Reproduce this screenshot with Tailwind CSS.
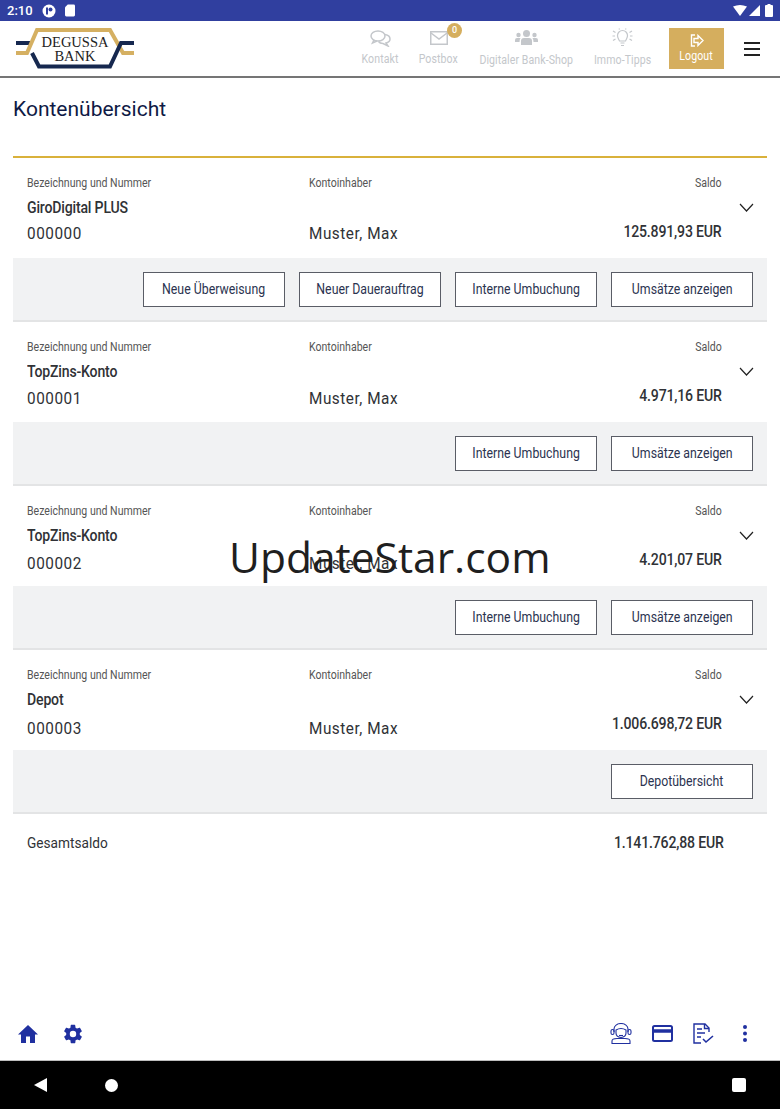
<!DOCTYPE html>
<html>
  <head>
    <meta charset="utf-8" />
    <title>Kontenübersicht</title>
    <script src="https://cdn.jsdelivr.net/npm/@tailwindcss/browser@4"></script>
  </head>

  <body class="bg-white font-['Roboto',sans-serif]">
    <div class="relative flex flex-col h-[1109px] w-[780px] overflow-hidden">
      <!-- Status bar -->
      <div class="flex items-center justify-between h-[21px] bg-[#303f9f] pl-[7px] pr-[7px] text-white shrink-0">
        <div class="flex items-center gap-[9px]">
          <span class="text-[13px] font-medium leading-none">2:10</span>
          <svg width="14" height="14" viewBox="0 0 14 14"><circle cx="7" cy="7" r="6.5" fill="#fff"/><rect x="4" y="3.5" width="2" height="7" fill="#303f9f"/><circle cx="8.5" cy="5.5" r="2" fill="#303f9f"/></svg>
          <svg width="10" height="13" viewBox="0 0 11 13"><path d="M3 0H9.500A1.500 1.500 0 0 1 11 1.500V11.500A1.500 1.500 0 0 1 9.500 13H1.500A1.500 1.500 0 0 1 0 11.500V3Z" fill="#fff"/></svg>
        </div>
        <div class="flex items-center gap-[2px]">
          <svg width="14" height="11" viewBox="0 0 14 11"><path d="M0 1.500Q7 -1.500 14 1.500L7 11Z" fill="#fff"/></svg>
          <svg width="11" height="11" viewBox="0 0 11 11"><path d="M11 0V11H0Z" fill="#fff"/></svg>
          <svg width="8" height="13" viewBox="0 0 8 13" class="ml-[3px]"><path d="M2.500 0H5.500V1H7A1 1 0 0 1 8 2V12A1 1 0 0 1 7 13H1A1 1 0 0 1 0 12V2A1 1 0 0 1 1 1H2.500Z" fill="#fff"/></svg>
        </div>
      </div>

      <!-- Header -->
      <header class="flex items-center justify-between h-[57px] border-b-2 border-[#757575] pl-[16px] shrink-0">
        <svg width="118" height="42" viewBox="0 0 118 42" class="mt-[-1px]">
          <path d="M0 16H15" stroke="#16284f" stroke-width="4" fill="none"/>
          <path d="M0 26H11L21 3H94L107 26H118" stroke="#d5b062" stroke-width="4" fill="none"/>
          <path d="M16 26L23 39.500H94L105 16H118" stroke="#16284f" stroke-width="4" fill="none"/>
          <text x="59" y="20" text-anchor="middle" font-family="Liberation Serif" font-size="14.500" fill="#222">DEGUSSA</text>
          <text x="59" y="34" text-anchor="middle" font-family="Liberation Serif" font-size="14.500" fill="#222">BANK</text>
        </svg>
        <nav class="flex items-start self-stretch text-[12px] leading-none text-[#c4c7cb] tracking-[0.1px]">
          <a class="flex flex-col items-center w-[36px] mr-[21px] pt-[9px]" href="#">
            <svg width="21" height="17" viewBox="0 0 21 17" fill="none" stroke="#c4c7cb" stroke-width="1.500"><ellipse cx="8" cy="6" rx="7" ry="5"/><path d="M4 10L2.500 13L7 11"/><path d="M15 4.500C18 5 20 7 20 9C20 11 18.500 12.500 16 13L18 16L13 13.500C11.500 13.500 9.500 13 8.500 11.500"/></svg>
            <span class="mt-[6px] whitespace-nowrap scale-x-[.88]">Kontakt</span>
          </a>
          <a class="relative flex flex-col items-center w-[39px] mr-[21px] pt-[10px]" href="#">
            <svg width="18" height="14" viewBox="0 0 18 14" fill="none" stroke="#c4c7cb" stroke-width="1.500"><rect x="0.750" y="0.750" width="16.500" height="12.500"/><path d="M1 2L9 8L17 2"/></svg>
            <span class="mt-[8px] whitespace-nowrap scale-x-[.88]">Postbox</span>
            <span class="absolute left-[28px] top-[2px] flex items-center justify-center size-[15px] rounded-full bg-[#d5ae5e] text-[9px] font-medium text-white">0</span>
          </a>
          <a class="flex flex-col items-center w-[95px] mr-[20px] pt-[9px]" href="#">
            <svg width="23" height="15" viewBox="0 0 23 15" fill="#c4c7cb"><circle cx="11.500" cy="3.500" r="3.500"/><circle cx="3.500" cy="5" r="2.200"/><circle cx="19.500" cy="5" r="2.200"/><path d="M6 15V11Q6 8 9 8H14Q17 8 17 11V15Z"/><path d="M0 12V10Q0 8 2 8H5.500Q4.500 9.500 4.500 12Z"/><path d="M23 12V10Q23 8 21 8H17.500Q18.500 9.500 18.500 12Z"/></svg>
            <span class="mt-[9px] whitespace-nowrap scale-x-[.88]">Digitaler Bank-Shop</span>
          </a>
          <a class="flex flex-col items-center w-[57px] mr-[18px] pt-[7px]" href="#">
            <svg width="21" height="19" viewBox="0 0 21 19" fill="none" stroke="#c4c7cb" stroke-width="1.200"><path d="M7.500 13C6.500 10.500 5.500 10 5.500 7.500A5 5 0 0 1 15.500 7.500C15.500 10 14.500 10.500 13.500 13Z"/><path d="M8.500 15H12.500M9 17.500H12"/><path d="M1 3L3.500 4.500M0.500 8H3M1 12.500L3.500 11M20 3L17.500 4.500M20.500 8H18M20 12.500L17.500 11M7 0.500L7.500 1.500M14 0.500L13.500 1.500"/></svg>
            <span class="mt-[7px] whitespace-nowrap scale-x-[.88]">Immo-Tipps</span>
          </a>
          <a class="flex flex-col items-center w-[55px] h-[41px] mt-[7px] bg-[#d5ae5e] text-white pt-[6px]" href="#">
            <svg width="14" height="13" viewBox="0 0 14 13" fill="none" stroke="#fff" stroke-width="1.400"><path d="M5 1H1.500V12H5"/><path d="M4 4.500H8V1.500L13 6.500L8 11.500V8.500H4Z"/></svg>
            <span class="mt-[3px] whitespace-nowrap scale-x-[.88]">Logout</span>
          </a>
          <button class="flex flex-col gap-[4px] w-[16px] ml-[20px] mr-[20px] mt-[21px]">
            <span class="h-[2px] bg-[#222]"></span>
            <span class="h-[2px] bg-[#222]"></span>
            <span class="h-[2px] bg-[#222]"></span>
          </button>
        </nav>
      </header>

      <!-- Content -->
      <main class="flex-1 px-[13px]">
        <h1 class="h-[80px] border-b-2 border-[#d9b13b] pt-[18px] text-[21px] leading-[26px] font-normal text-[#0f1a45]">Kontenübersicht</h1>

        <section class="border-b-2 border-[#e3e4e5]">
          <div class="relative flex h-[100px] pl-[14px] pr-[45px] pt-[18px] text-[#303236]">
            <div class="w-[282px]">
              <p class="text-[12px] leading-[15px] text-[#555] origin-left scale-x-[.88]">Bezeichnung und Nummer</p>
              <p class="mt-[7px] text-[16px] leading-[20px] font-medium tracking-[-0.2px] origin-left scale-x-[.88]">GiroDigital PLUS</p>
              <p class="mt-[4px] text-[17px] leading-[22px] tracking-[0.6px] origin-left scale-x-[.9]">000000</p>
            </div>
            <div class="flex-1">
              <p class="text-[12px] leading-[15px] text-[#555] origin-left scale-x-[.88]">Kontoinhaber</p>
              <p class="mt-[31px] text-[17px] leading-[22px] tracking-[0.6px] origin-left scale-x-[.9]">Muster, Max</p>
            </div>
            <div class="text-right">
              <p class="text-[12px] leading-[15px] text-[#555] origin-right scale-x-[.88]">Saldo</p>
              <p class="mt-[30px] text-[16px] leading-[22px] font-medium tracking-[-0.2px] origin-right scale-x-[.88]">125.891,93 EUR</p>
            </div>
            <svg class="absolute right-[13px] top-[45px]" width="15" height="9" viewBox="0 0 15 9" fill="none" stroke="#222" stroke-width="1.200"><path d="M1 1L7.500 8L14 1"/></svg>
          </div>
          <div class="flex justify-end gap-[14px] h-[62px] bg-[#f1f2f3] pt-[14px] pr-[14px]">
            <button class="w-[142px] h-[35px] border border-[#5a5d66] bg-white text-[14px] text-[#2b3350]"><span class="inline-block whitespace-nowrap scale-x-[.88]">Neue Überweisung</span></button>
            <button class="w-[142px] h-[35px] border border-[#5a5d66] bg-white text-[14px] text-[#2b3350]"><span class="inline-block whitespace-nowrap scale-x-[.88]">Neuer Dauerauftrag</span></button>
            <button class="w-[142px] h-[35px] border border-[#5a5d66] bg-white text-[14px] text-[#2b3350]"><span class="inline-block whitespace-nowrap scale-x-[.88]">Interne Umbuchung</span></button>
            <button class="w-[142px] h-[35px] border border-[#5a5d66] bg-white text-[14px] text-[#2b3350]"><span class="inline-block whitespace-nowrap scale-x-[.88]">Umsätze anzeigen</span></button>
          </div>
        </section>

        <section class="border-b-2 border-[#e3e4e5]">
          <div class="relative flex h-[100px] pl-[14px] pr-[45px] pt-[18px] text-[#303236]">
            <div class="w-[282px]">
              <p class="text-[12px] leading-[15px] text-[#555] origin-left scale-x-[.88]">Bezeichnung und Nummer</p>
              <p class="mt-[7px] text-[16px] leading-[20px] font-medium tracking-[-0.2px] origin-left scale-x-[.88]">TopZins-Konto</p>
              <p class="mt-[5px] text-[17px] leading-[22px] tracking-[0.6px] origin-left scale-x-[.9]">000001</p>
            </div>
            <div class="flex-1">
              <p class="text-[12px] leading-[15px] text-[#555] origin-left scale-x-[.88]">Kontoinhaber</p>
              <p class="mt-[32px] text-[17px] leading-[22px] tracking-[0.6px] origin-left scale-x-[.9]">Muster, Max</p>
            </div>
            <div class="text-right">
              <p class="text-[12px] leading-[15px] text-[#555] origin-right scale-x-[.88]">Saldo</p>
              <p class="mt-[30px] text-[16px] leading-[22px] font-medium tracking-[-0.2px] origin-right scale-x-[.88]">4.971,16 EUR</p>
            </div>
            <svg class="absolute right-[13px] top-[45px]" width="15" height="9" viewBox="0 0 15 9" fill="none" stroke="#222" stroke-width="1.200"><path d="M1 1L7.500 8L14 1"/></svg>
          </div>
          <div class="flex justify-end gap-[14px] h-[62px] bg-[#f1f2f3] pt-[14px] pr-[14px]">
            <button class="w-[142px] h-[35px] border border-[#5a5d66] bg-white text-[14px] text-[#2b3350]"><span class="inline-block whitespace-nowrap scale-x-[.88]">Interne Umbuchung</span></button>
            <button class="w-[142px] h-[35px] border border-[#5a5d66] bg-white text-[14px] text-[#2b3350]"><span class="inline-block whitespace-nowrap scale-x-[.88]">Umsätze anzeigen</span></button>
          </div>
        </section>

        <section class="border-b-2 border-[#e3e4e5]">
          <div class="relative flex h-[100px] pl-[14px] pr-[45px] pt-[18px] text-[#303236]">
            <div class="w-[282px]">
              <p class="text-[12px] leading-[15px] text-[#555] origin-left scale-x-[.88]">Bezeichnung und Nummer</p>
              <p class="mt-[7px] text-[16px] leading-[20px] font-medium tracking-[-0.2px] origin-left scale-x-[.88]">TopZins-Konto</p>
              <p class="mt-[6px] text-[17px] leading-[22px] tracking-[0.6px] origin-left scale-x-[.9]">000002</p>
            </div>
            <div class="flex-1">
              <p class="text-[12px] leading-[15px] text-[#555] origin-left scale-x-[.88]">Kontoinhaber</p>
              <p class="mt-[33px] text-[17px] leading-[22px] tracking-[0.6px] origin-left scale-x-[.9]">Muster, Max</p>
            </div>
            <div class="text-right">
              <p class="text-[12px] leading-[15px] text-[#555] origin-right scale-x-[.88]">Saldo</p>
              <p class="mt-[30px] text-[16px] leading-[22px] font-medium tracking-[-0.2px] origin-right scale-x-[.88]">4.201,07 EUR</p>
            </div>
            <svg class="absolute right-[13px] top-[45px]" width="15" height="9" viewBox="0 0 15 9" fill="none" stroke="#222" stroke-width="1.200"><path d="M1 1L7.500 8L14 1"/></svg>
          </div>
          <div class="flex justify-end gap-[14px] h-[62px] bg-[#f1f2f3] pt-[14px] pr-[14px]">
            <button class="w-[142px] h-[35px] border border-[#5a5d66] bg-white text-[14px] text-[#2b3350]"><span class="inline-block whitespace-nowrap scale-x-[.88]">Interne Umbuchung</span></button>
            <button class="w-[142px] h-[35px] border border-[#5a5d66] bg-white text-[14px] text-[#2b3350]"><span class="inline-block whitespace-nowrap scale-x-[.88]">Umsätze anzeigen</span></button>
          </div>
        </section>

        <section class="border-b-2 border-[#e3e4e5]">
          <div class="relative flex h-[100px] pl-[14px] pr-[45px] pt-[18px] text-[#303236]">
            <div class="w-[282px]">
              <p class="text-[12px] leading-[15px] text-[#555] origin-left scale-x-[.88]">Bezeichnung und Nummer</p>
              <p class="mt-[7px] text-[16px] leading-[20px] font-medium tracking-[-0.2px] origin-left scale-x-[.88]">Depot</p>
              <p class="mt-[7px] text-[17px] leading-[22px] tracking-[0.6px] origin-left scale-x-[.9]">000003</p>
            </div>
            <div class="flex-1">
              <p class="text-[12px] leading-[15px] text-[#555] origin-left scale-x-[.88]">Kontoinhaber</p>
              <p class="mt-[34px] text-[17px] leading-[22px] tracking-[0.6px] origin-left scale-x-[.9]">Muster, Max</p>
            </div>
            <div class="text-right">
              <p class="text-[12px] leading-[15px] text-[#555] origin-right scale-x-[.88]">Saldo</p>
              <p class="mt-[30px] text-[16px] leading-[22px] font-medium tracking-[-0.2px] origin-right scale-x-[.88]">1.006.698,72 EUR</p>
            </div>
            <svg class="absolute right-[13px] top-[45px]" width="15" height="9" viewBox="0 0 15 9" fill="none" stroke="#222" stroke-width="1.200"><path d="M1 1L7.500 8L14 1"/></svg>
          </div>
          <div class="flex justify-end gap-[14px] h-[62px] bg-[#f1f2f3] pt-[14px] pr-[14px]">
            <button class="w-[142px] h-[35px] border border-[#5a5d66] bg-white text-[14px] text-[#2b3350]"><span class="inline-block whitespace-nowrap scale-x-[.88]">Depotübersicht</span></button>
          </div>
        </section>

        <div class="flex justify-between pl-[14px] pr-[43px] pt-[19px] text-[#303236]">
          <span class="text-[15px] leading-[20px] origin-left scale-x-[.91]">Gesamtsaldo</span>
          <span class="text-[16px] leading-[20px] font-medium tracking-[-0.2px] origin-right scale-x-[.88]">1.141.762,88 EUR</span>
        </div>
      </main>

      <!-- Bottom toolbar -->
      <div class="flex items-center justify-between h-[54px] border-b border-[#bdbdbd] pl-[18px] pr-[32px] shrink-0">
        <div class="flex items-center gap-[24px]">
          <svg width="20" height="18" viewBox="0 0 20 18" fill="#2030a0"><path d="M10 0L20 9.500H17V18H12V11.500H8V18H3V9.500H0Z"/></svg>
          <svg width="22" height="22" viewBox="0 0 24 24" fill="#2030a0"><path fill-rule="evenodd" d="M19.400 13A7.500 7.500 0 0 0 19.400 11L21.500 9.400A.5.5 0 0 0 21.600 8.800L19.600 5.300A.5.5 0 0 0 19 5.100L16.500 6.100A7.500 7.500 0 0 0 14.800 5.100L14.400 2.400A.5.5 0 0 0 13.900 2H10A.5.5 0 0 0 9.500 2.400L9.200 5.100A7.500 7.500 0 0 0 7.500 6.100L5 5.100A.5.5 0 0 0 4.400 5.300L2.400 8.800A.5.5 0 0 0 2.500 9.400L4.600 11A7.500 7.500 0 0 0 4.600 13L2.500 14.600A.5.5 0 0 0 2.400 15.200L4.400 18.700A.5.5 0 0 0 5 18.900L7.500 17.900A7.500 7.500 0 0 0 9.200 18.900L9.500 21.600A.5.5 0 0 0 10 22H14A.5.5 0 0 0 14.500 21.600L14.800 18.900A7.500 7.500 0 0 0 16.500 17.900L19 18.900A.5.5 0 0 0 19.600 18.700L21.600 15.200A.5.5 0 0 0 21.500 14.600ZM12 15.500A3.500 3.500 0 1 1 12 8.500A3.500 3.500 0 0 1 12 15.500Z"/></svg>
        </div>
        <div class="flex items-center gap-[20px]">
          <svg width="22" height="21" viewBox="0 0 22 21" fill="none" stroke="#2030a0" stroke-width="1.100"><path d="M4 9V6A7 5.500 0 0 1 18 6V9"/><rect x="1" y="6.500" width="3" height="5" rx="1.500"/><rect x="18" y="6.500" width="3" height="5" rx="1.500"/><path d="M6 7Q11 4 16 7V10Q16 14 11 14.500Q6 14 6 10Z"/><path d="M9 12.500H13"/><path d="M2 20.500V18Q2 15.500 7 15.500H15Q20 15.500 20 18V20.500Z"/></svg>
          <svg width="21" height="17" viewBox="0 0 21 17" fill="none" stroke="#2030a0" stroke-width="2"><rect x="1" y="1" width="19" height="15" rx="1.500"/><path d="M1 6H20" stroke-width="3.500"/></svg>
          <svg width="21" height="21" viewBox="0 0 21 21" fill="none" stroke="#2030a0" stroke-width="1.400"><path d="M16 9V5L12 1H1V20H8"/><path d="M11.500 1V5.500H16"/><path d="M4 6H9M4 10H12M4 14H8"/><path d="M10 16L13 19L20 13" stroke-width="1.600"/></svg>
          <svg width="6" height="17" viewBox="0 0 6 17" fill="#2030a0" class="ml-[8px]"><circle cx="3" cy="2" r="2"/><circle cx="3" cy="8.500" r="2"/><circle cx="3" cy="15" r="2"/></svg>
        </div>
      </div>

      <!-- Android nav bar -->
      <div class="flex items-center h-[48px] bg-black shrink-0 pl-[34px] pr-[34px]">
        <svg width="13" height="14" viewBox="0 0 13 14" fill="#fff"><path d="M13 0V14L0 7Z"/></svg>
        <span class="ml-[58px] size-[13px] rounded-full bg-white"></span>
        <span class="ml-auto size-[14px] rounded-[2px] bg-white"></span>
      </div>

      <!-- Watermark -->
      <div class="absolute left-[229px] top-[527px] text-[42.5px] leading-[60px] font-['Open_Sans',sans-serif] text-[#1f1f1f]">UpdateStar.com</div>
    </div>
  </body>
</html>
